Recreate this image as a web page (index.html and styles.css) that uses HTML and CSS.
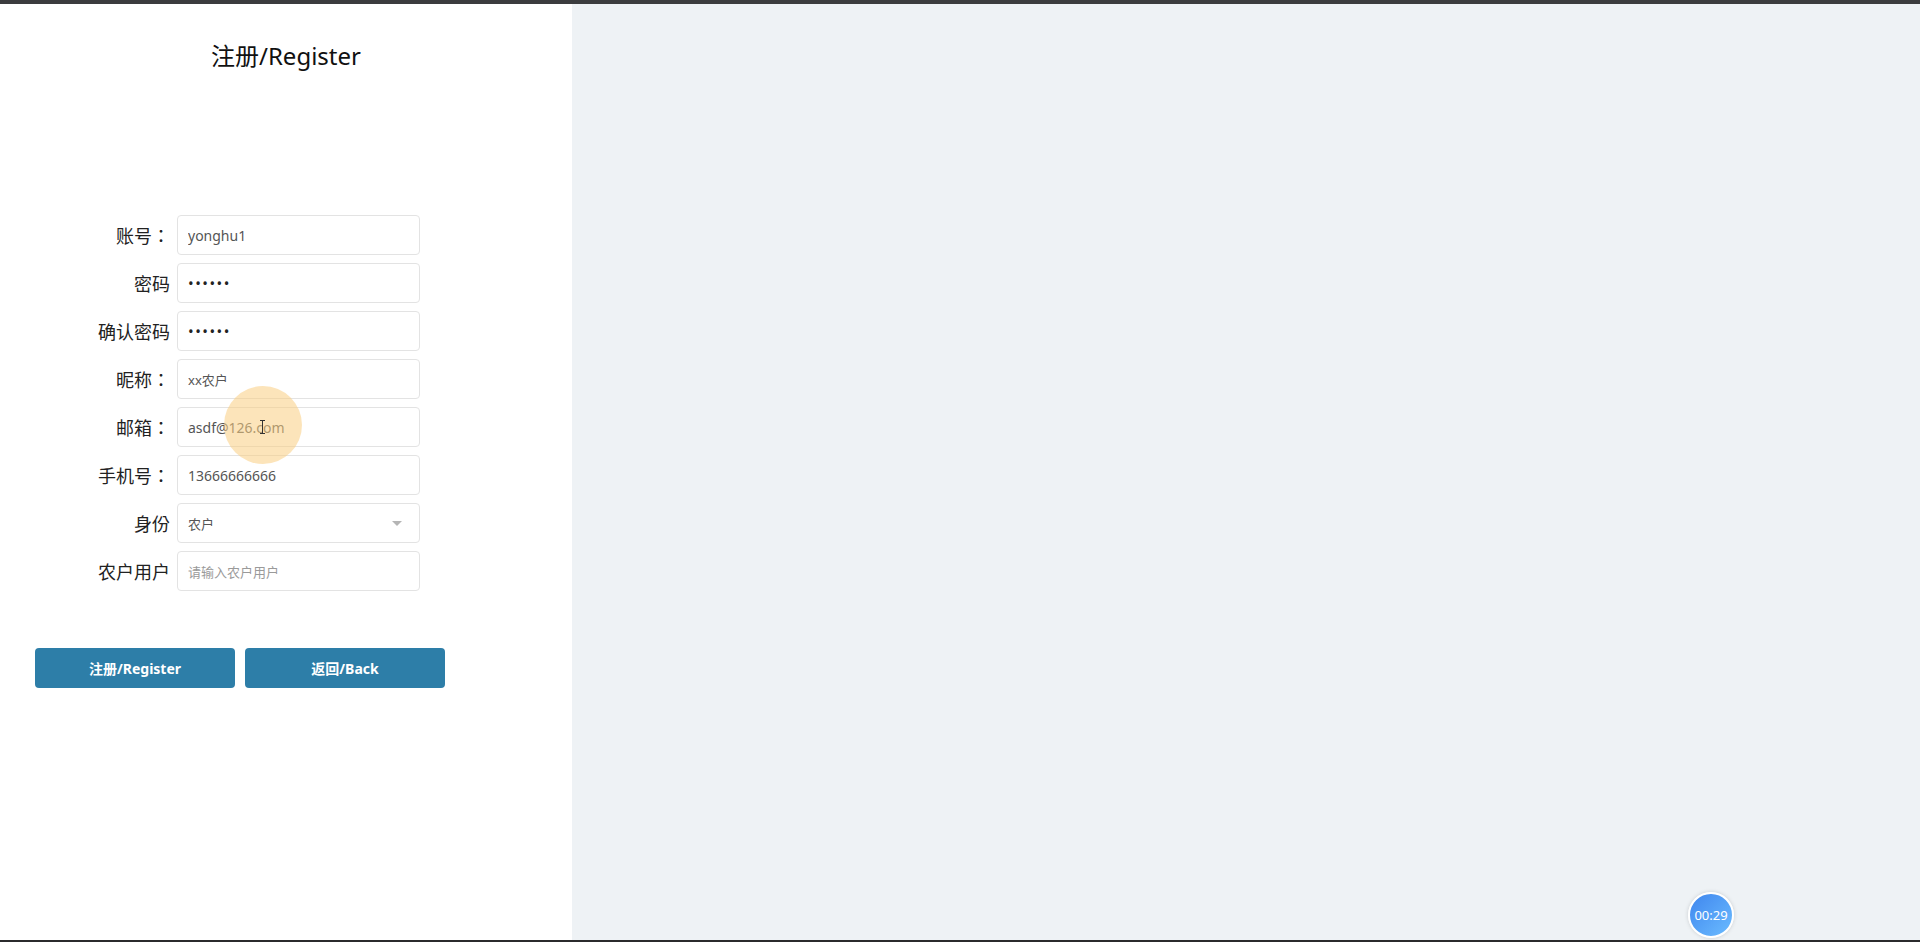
FILE: index.html
```html
<!DOCTYPE html>
<html lang="zh-CN">
<head>
    <meta charset="UTF-8">
    <meta name="viewport" content="width=device-width, initial-scale=1.0">
    <title>注册</title>
    <link rel="stylesheet" href="styles.css">
</head>
<body>
    <div class="topbar"></div>
    <div class="page">
        <div class="panel">
            <h2 class="title">注册/Register</h2>
            <form class="form">
                <div class="row">
                    <label class="label">账号：</label>
                    <input class="field" type="text" value="yonghu1">
                </div>
                <div class="row">
                    <label class="label">密码</label>
                    <input class="field" type="password" value="123456">
                </div>
                <div class="row">
                    <label class="label">确认密码</label>
                    <input class="field" type="password" value="123456">
                </div>
                <div class="row">
                    <label class="label">昵称：</label>
                    <input class="field small" type="text" value="xx农户">
                </div>
                <div class="row">
                    <label class="label">邮箱：</label>
                    <div class="field-wrap">
                        <input class="field" type="text" value="asdf@126.com">
                        <div class="halo"></div>
                        <div class="ibeam"></div>
                    </div>
                </div>
                <div class="row">
                    <label class="label">手机号：</label>
                    <input class="field" type="text" value="13666666666">
                </div>
                <div class="row">
                    <label class="label">身份</label>
                    <div class="select">农户</div>
                </div>
                <div class="row">
                    <label class="label">农户用户</label>
                    <input class="field" type="text" placeholder="请输入农户用户">
                </div>
                <div class="actions">
                    <button class="btn" type="button">注册/Register</button>
                    <button class="btn" type="button">返回/Back</button>
                </div>
            </form>
        </div>
        <div class="main"></div>
    </div>
    <div class="bottombar"></div>
    <div class="timer">00:29</div>
</body>
</html>
```

FILE: styles.css
```css
html, body {
    margin: 0;
    height: 100%;
}

body {
    display: flex;
    flex-direction: column;
    background: #eef2f5;
    font-family: "Noto Sans", "Noto Sans CJK SC", sans-serif;
    color: #222;
    overflow: hidden;
}

.topbar {
    height: 4px;
    background: #3b3c3e;
}

.bottombar {
    height: 2px;
    background: #2b2b2d;
}

.page {
    flex: 1;
    display: flex;
}

.panel {
    width: 572px;
    background: #fff;
    padding-top: 36px;
    box-sizing: border-box;
}

.main {
    flex: 1;
    background: #eef2f5;
}

.title {
    margin: 0;
    font-size: 24px;
    font-weight: normal;
    line-height: 32px;
    text-align: center;
    color: #111;
}

.form {
    margin-top: 143px;
    display: flex;
    flex-direction: column;
    gap: 8px;
}

.row {
    display: flex;
    align-items: center;
    height: 40px;
}

/* 全角冒号居中 */
.label {
    width: 177px;
    padding-right: 7px;
    box-sizing: border-box;
    text-align: right;
    font-family: "Noto Sans CJK TC", "Noto Sans CJK SC", sans-serif;
    font-feature-settings: "locl" 0;
    font-size: 18px;
    color: #222;
    white-space: nowrap;
}

.field,
.select {
    width: 243px;
    height: 40px;
    box-sizing: border-box;
    border: 1px solid #e3e3e3;
    border-radius: 4px;
    padding: 0 10px;
    font-family: inherit;
    font-size: 14px;
    color: #555;
    background: #fff;
    outline: none;
}

.field.small {
    font-size: 13px;
}

.field::placeholder {
    color: #9a9a9a;
    font-size: 13px;
}

.field[type="password"] {
    font-size: 15px;
    letter-spacing: 1.5px;
    color: #222;
}

.field-wrap {
    position: relative;
}

.halo {
    position: absolute;
    left: 47px;
    top: -21px;
    width: 78px;
    height: 78px;
    border-radius: 50%;
    background: rgba(250, 205, 130, 0.55);
    pointer-events: none;
}

.ibeam {
    position: absolute;
    left: 85px;
    top: 13px;
    width: 1px;
    height: 14px;
    background: #333;
}

.ibeam::before,
.ibeam::after {
    content: '';
    position: absolute;
    left: -2px;
    width: 5px;
    height: 1px;
    background: #333;
}

.ibeam::before {
    top: 0;
}

.ibeam::after {
    bottom: 0;
}

.select {
    position: relative;
    display: flex;
    align-items: center;
    font-size: 13px;
}

.select::after {
    content: '';
    position: absolute;
    right: 17px;
    top: 17px;
    border-left: 5px solid transparent;
    border-right: 5px solid transparent;
    border-top: 5px solid #b5b5b5;
}

.actions {
    margin-top: 49px;
    padding-left: 35px;
    display: flex;
    gap: 10px;
}

.btn {
    width: 200px;
    height: 40px;
    border: none;
    border-radius: 4px;
    background: #2d7ea8;
    color: #fff;
    font-family: inherit;
    font-size: 14px;
    font-weight: bold;
    cursor: pointer;
}

.timer {
    position: absolute;
    left: 1688px;
    top: 892px;
    width: 42px;
    height: 42px;
    border: 2px solid #fff;
    border-radius: 50%;
    background: linear-gradient(135deg, #3f86ee, #6bbcff);
    box-shadow: 0 0 4px rgba(0, 0, 0, 0.15);
    color: #fff;
    font-size: 13px;
    display: flex;
    justify-content: center;
    align-items: center;
}
```
